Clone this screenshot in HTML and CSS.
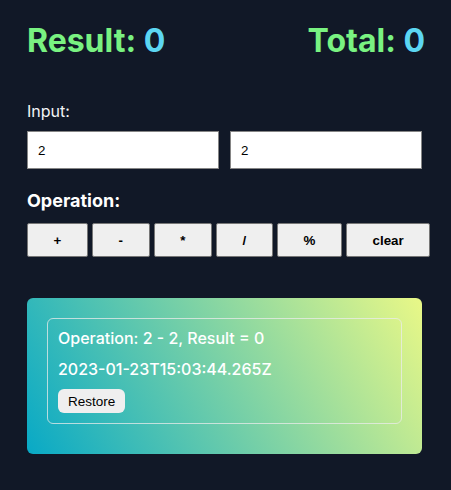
FILE: index.html
```html
<!DOCTYPE html>
<html>
<head>
<meta charset="utf-8">
<link rel="stylesheet" href="styles.css">
</head>
<body>
<div class="app">
  <div class="header">
    <h1 class="stat">Result: <span class="num">0</span></h1>
    <h1 class="stat">Total: <span class="num">0</span></h1>
  </div>
  <div class="label">Input:</div>
  <div class="inputs">
    <input class="field" type="text" value="2">
    <input class="field" type="text" value="2">
  </div>
  <div class="label-bold">Operation:</div>
  <div class="ops">
    <button class="op">+</button>
    <button class="op">-</button>
    <button class="op">*</button>
    <button class="op">/</button>
    <button class="op">%</button>
    <button class="op">clear</button>
  </div>
  <div class="history">
    <div class="entry">
      <p class="line">Operation: 2 - 2, Result = 0</p>
      <p class="line line2">2023-01-23T15:03:44.265Z</p>
      <button class="restore">Restore</button>
    </div>
  </div>
</div>
</body>
</html>
```
FILE: styles.css
```css
* { box-sizing: border-box; }
html, body { margin: 0; padding: 0; }
body {
  background: #111827;
  font-family: Inter, "Noto Sans", sans-serif;
  color: #fff;
  width: 451px;
  height: 490px;
  overflow: hidden;
}
.app {
  width: 395px;
  margin-left: 27px;
  padding-top: 23px;
}
.header {
  display: flex;
  justify-content: space-between;
  width: 398px;
  height: 36px;
}
.stat {
  margin: 0;
  font-size: 32px;
  line-height: 36px;
  font-weight: 700;
  color: #79f281;
  white-space: nowrap;
}
.num { color: #5cd6f2; }
.label {
  margin-top: 40px;
  font-size: 16px;
  line-height: 24px;
  color: #f3f4f6;
}
.inputs {
  margin-top: 8px;
  display: grid;
  grid-template-columns: 192px 192px;
  column-gap: 11px;
}
.field {
  height: 38px;
  border: 1px solid #858585;
  background: #fff;
  padding: 0 10px;
  font-family: "Liberation Sans", Arial, sans-serif;
  font-size: 13.33px;
  color: #000;
  outline: none;
}
.label-bold {
  margin-top: 18px;
  font-size: 18px;
  line-height: 28px;
  font-weight: 700;
}
.ops {
  margin-top: 8px;
  display: flex;
  gap: 4px;
}
.op {
  flex-shrink: 0;
  height: 34px;
  padding: 0 25.6px;
  background: #efefef;
  border: 1px solid #767676;
  border-radius: 2px;
  font-family: "Liberation Sans", Arial, sans-serif;
  font-size: 13.33px;
  font-weight: 700;
  color: #000;
}
.history {
  margin-top: 41px;
  height: 156px;
  padding: 20px;
  border-radius: 6px;
  background: linear-gradient(60deg, #08a9c6, #e9f887);
}
.entry {
  border: 1px solid rgba(235, 235, 235, 0.75);
  border-radius: 6px;
  padding: 7px 10px 10px 10px;
}
.line {
  margin: 0;
  font-size: 16px;
  line-height: 24px;
  font-weight: 500;
  color: #fff;
}
.line2 { margin-top: 7px; }
.restore {
  margin-top: 8px;
  height: 24px;
  padding: 0 10px;
  border: none;
  border-radius: 6px;
  background: #efefef;
  font-family: "Liberation Sans", Arial, sans-serif;
  font-size: 13.5px;
  color: #000;
}
```
